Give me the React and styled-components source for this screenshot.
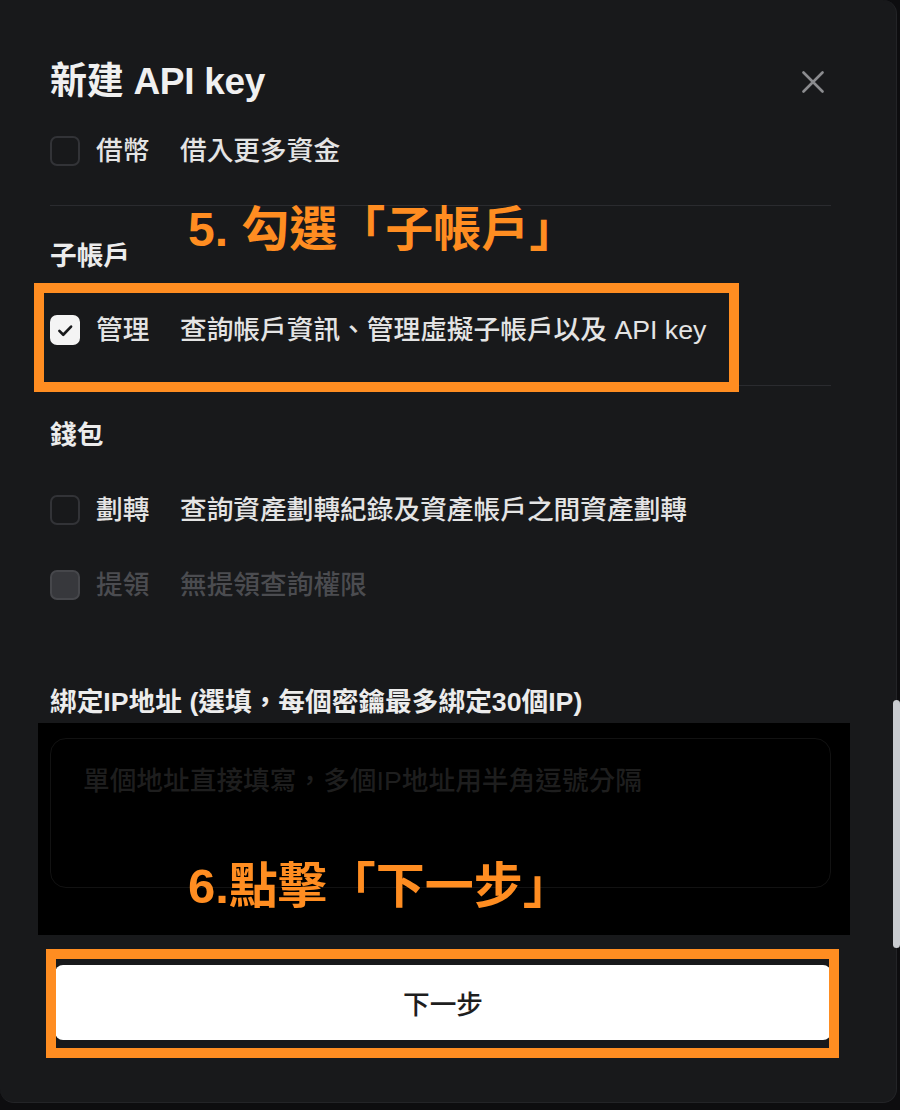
import React from "react";
import styled, { createGlobalStyle } from "styled-components";

const GlobalStyle = createGlobalStyle`
  html, body {
    margin: 0;
    padding: 0;
    background: #0d0d0f;
  }
  body {
    font-family: "Liberation Sans", "Noto Sans CJK TC", sans-serif;
    color: #e8e8e8;
  }
`;

const orange = "#ff8d21";

const Panel = styled.div`
  position: relative;
  box-sizing: border-box;
  width: 897px;
  height: 1103px;
  padding: 0 65px 0 50px;
  display: flex;
  flex-direction: column;
  background: #18191b;
  border: 1px solid #232427;
  border-left: none;
  border-top: none;
  border-radius: 0 14px 14px 14px;
`;

const Header = styled.div`
  display: flex;
  align-items: center;
  justify-content: space-between;
  height: 40px;
  margin-top: 62px;
`;

const Title = styled.h1`
  margin: 0;
  font-size: 37px;
  line-height: 40px;
  font-weight: 700;
  color: #f0f0f0;
  letter-spacing: -0.3px;
`;

const CloseButton = styled.button`
  width: 36px;
  height: 36px;
  padding: 0;
  border: none;
  background: transparent;
  display: flex;
  align-items: center;
  justify-content: center;
  cursor: pointer;
`;

const Row = styled.div`
  position: relative;
  display: flex;
  align-items: center;
  height: 30px;
  margin-top: ${(p) => p.$mt}px;
  font-size: 26.7px;
  line-height: 30px;
  font-weight: 500;
  color: ${(p) => (p.$disabled ? "#4b4c50" : "#e4e4e4")};
`;

const Box = styled.span`
  flex: none;
  box-sizing: border-box;
  width: 30px;
  height: 30px;
  margin-right: 16px;
  border-radius: 7px;
  display: flex;
  align-items: center;
  justify-content: center;
  border: 2px solid ${(p) => (p.$disabled ? "#46474b" : p.$checked ? "#f4f4f4" : "#323337")};
  background: ${(p) => (p.$disabled ? "#37383c" : p.$checked ? "#f4f4f4" : "transparent")};
`;

const Label = styled.span`
  flex: none;
  width: 84px;
`;

const Desc = styled.span`
  white-space: nowrap;
`;

const Divider = styled.div`
  height: 1px;
  margin-top: ${(p) => p.$mt}px;
  background: #2a2b2f;
`;

const SectionHead = styled.div`
  position: relative;
  height: 30px;
  margin-top: ${(p) => p.$mt}px;
  font-size: 26.7px;
  line-height: 30px;
  font-weight: 700;
  color: #ececec;
  white-space: nowrap;
`;

const Callout = styled.div`
  position: absolute;
  left: ${(p) => p.$left}px;
  top: ${(p) => p.$top}px;
  font-size: ${(p) => p.$size}px;
  line-height: 48px;
  font-weight: 700;
  color: ${orange};
  white-space: nowrap;
  z-index: 3;
`;

const Highlight = styled.div`
  position: absolute;
  box-sizing: border-box;
  left: ${(p) => p.$left}px;
  top: ${(p) => p.$top}px;
  width: ${(p) => p.$w}px;
  height: ${(p) => p.$h}px;
  border: 10px solid ${orange};
  pointer-events: none;
  z-index: 2;
`;

const FieldWrap = styled.div`
  position: relative;
  margin-top: 21px;
  height: 150px;
`;

const Blackout = styled.div`
  position: absolute;
  left: -12px;
  right: -19px;
  top: -15px;
  bottom: -47px;
  background: #000;
`;

const TextArea = styled.textarea`
  position: relative;
  box-sizing: border-box;
  display: block;
  width: 100%;
  height: 150px;
  padding: 27px 32px;
  border: 1.5px solid #121212;
  border-radius: 16px;
  background: transparent;
  color: #ddd;
  font-family: inherit;
  font-size: 26.7px;
  font-weight: 500;
  line-height: 30px;
  resize: vertical;
  outline: none;

  &::placeholder {
    color: #1e1e1e;
  }
  &::-webkit-resizer {
    background: transparent;
  }
`;

const ButtonWrap = styled.div`
  position: relative;
  margin-top: 77px;
  margin-left: 5px;
  width: 776px;
`;

const PrimaryButton = styled.button`
  display: block;
  width: 100%;
  height: 75px;
  border: none;
  border-radius: 8px;
  background: #ffffff;
  color: #1e1e1e;
  font-family: inherit;
  font-size: 26.7px;
  font-weight: 500;
  cursor: pointer;
`;

const ScrollThumb = styled.div`
  position: absolute;
  right: -4px;
  top: 700px;
  width: 7px;
  height: 248px;
  border-radius: 4px;
  background: #c9ccd0;
`;

const Check = () => (
  <svg width="30" height="30" viewBox="0 0 30 30">
    <polyline
      points="8.5,16 13,20.5 22,11"
      fill="none"
      stroke="#18191b"
      strokeWidth="3"
      strokeLinecap="round"
      strokeLinejoin="round"
    />
  </svg>
);

const CloseIcon = () => (
  <svg width="22" height="22" viewBox="0 0 22 22">
    <path d="M1.5 1.5L20.5 20.5M20.5 1.5L1.5 20.5" stroke="#8b8c8f" strokeWidth="2.6" strokeLinecap="round" />
  </svg>
);

function Permission({ label, desc, checked, disabled, mt, children }) {
  return (
    <Row $mt={mt} $disabled={disabled}>
      <Box $checked={checked} $disabled={disabled}>
        {checked && <Check />}
      </Box>
      <Label>{label}</Label>
      <Desc>{desc}</Desc>
      {children}
    </Row>
  );
}

export default function App() {
  return (
    <>
      <GlobalStyle />
      <Panel>
        <Header>
          <Title>新建 API key</Title>
          <CloseButton aria-label="close">
            <CloseIcon />
          </CloseButton>
        </Header>

        <Permission mt={34} label="借幣" desc="借入更多資金" />
        <Divider $mt={39} />

        <SectionHead $mt={35}>
          子帳戶
          <Callout $size={48} $left={138} $top={-35}>5. 勾選「子帳戶」</Callout>
        </SectionHead>
        <Permission mt={44} checked label="管理" desc="查詢帳戶資訊、管理虛擬子帳戶以及 API key">
          <Highlight $left={-16} $top={-32} $w={705} $h={109} />
        </Permission>
        <Divider $mt={40} />

        <SectionHead $mt={34}>錢包</SectionHead>
        <Permission mt={45} label="劃轉" desc="查詢資產劃轉紀錄及資產帳戶之間資產劃轉" />
        <Permission mt={45} disabled label="提領" desc="無提領查詢權限" />

        <SectionHead $mt={87}>綁定IP地址 (選填，每個密鑰最多綁定30個IP)</SectionHead>
        <FieldWrap>
          <Blackout />
          <TextArea placeholder="單個地址直接填寫，多個IP地址用半角逗號分隔" />
          <Callout $size={49} $left={138} $top={124}>6.點擊「下一步」</Callout>
        </FieldWrap>

        <ButtonWrap>
          <PrimaryButton>下一步</PrimaryButton>
          <Highlight $left={-9} $top={-16} $w={793} $h={109} />
        </ButtonWrap>

        <ScrollThumb />
      </Panel>
    </>
  );
}
